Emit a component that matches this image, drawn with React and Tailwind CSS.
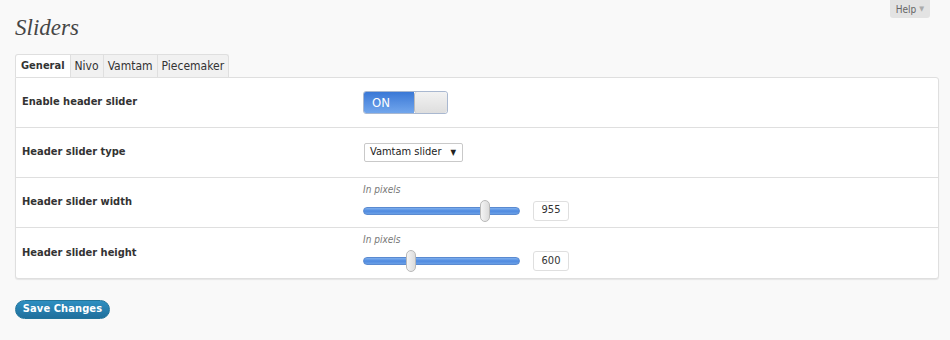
import React from "react";

function Slider({ pos, value }) {
  return (
    <div className="flex flex-col">
      <div className="text-[10px] italic text-[#777] leading-[12px] h-[12px]">In pixels</div>
      <div className="flex items-center mt-[4px]">
        <div className="relative w-[157px] h-[22px] flex items-center">
          <div className="w-full h-[8px] rounded-full bg-gradient-to-b from-[#7fb0ee] via-[#4f8ae0] to-[#6a9fe6] border border-[#5a8ad0]" />
          <div
            className="absolute top-0 w-[10px] h-[22px] rounded-full border border-[#b9b9b9] bg-gradient-to-r from-[#f4f4f4] to-[#dcdcdc]"
            style={{ left: pos }}
          />
        </div>
        <div className="ml-[13px] w-[36px] h-[20px] rounded-[3px] border border-[#dfdfdf] bg-white text-[11px] text-[#333] flex items-center justify-center">
          {value}
        </div>
      </div>
    </div>
  );
}

function Row({ label, children, last }) {
  return (
    <div className={"flex h-[50px] items-center " + (last ? "" : "border-b border-[#dfdfdf]")}>
      <div className="w-[347px] pl-[6px] text-[11px] font-bold text-[#333]">{label}</div>
      <div className="flex-1">{children}</div>
    </div>
  );
}

export default function App() {
  return (
    <div
      className="relative w-[950px] h-[340px] bg-[#f9f9f9] overflow-hidden"
      style={{ fontFamily: '"DejaVu Sans Condensed", "DejaVu Sans", Verdana, sans-serif' }}
    >
      <div className="absolute top-0 right-[20px] w-[40px] h-[18px] bg-[#e3e3e3] rounded-b-[3px] text-[10px] text-[#666] flex items-center justify-center gap-[3px]">
        <span>Help</span>
        <span className="text-[7px] text-[#aaa]">▼</span>
      </div>
      <div className="px-[15px]">
        <h2
          className="pt-[14px] h-[54px] text-[23px] italic text-[#464646] leading-[28px]"
          style={{ fontFamily: '"Liberation Serif", Georgia, serif' }}
        >
          Sliders
        </h2>
        <div className="flex h-[23px] items-stretch">
          <div className="px-[5px] flex items-center bg-white border border-b-0 border-[#dfdfdf] rounded-tl-[3px] text-[11px] font-bold text-[#333]">General</div>
          <div className="px-[4px] flex items-center bg-[#f1f1f1] border-t border-r border-[#dfdfdf] text-[12px] text-[#333]">Nivo</div>
          <div className="px-[4px] flex items-center bg-[#f1f1f1] border-t border-r border-[#dfdfdf] text-[12px] text-[#333]">Vamtam</div>
          <div className="px-[4px] flex items-center bg-[#f1f1f1] border-t border-r border-[#dfdfdf] rounded-tr-[3px] text-[12px] text-[#333]">Piecemaker</div>
        </div>
        <div className="w-[924px] bg-white border border-[#dfdfdf] rounded-b-[3px] rounded-tr-[3px] shadow-[0_1px_1px_rgba(0,0,0,0.08)]">
          <Row label="Enable header slider">
            <div className="flex w-[85px] h-[23px] rounded-[3px] border border-[#a9b8d0] overflow-hidden">
              <div className="w-[50px] bg-gradient-to-b from-[#3a78d6] to-[#72a6ec] text-white text-[13px] flex items-center pl-[8px]">ON</div>
              <div className="flex-1 bg-gradient-to-b from-[#f2f2f2] to-[#dedede] border-l border-[#bbb] rounded-[3px]" />
            </div>
          </Row>
          <Row label="Header slider type">
            <div className="w-[99px] h-[19px] ml-[1px] border border-[#c9c9c9] rounded-[2px] bg-white flex items-center justify-between pl-[5px] pr-[6px] text-[11px] text-[#222]">
              <span>Vamtam slider</span>
              <span className="text-[8px]">▼</span>
            </div>
          </Row>
          <Row label="Header slider width">
            <Slider pos={117} value="955" />
          </Row>
          <Row label="Header slider height" last>
            <Slider pos={43} value="600" />
          </Row>
        </div>
        <button className="mt-[21px] h-[19px] w-[95px] rounded-full bg-gradient-to-b from-[#2e8fc1] to-[#1f6f9c] border border-[#21759b] text-white text-[11px] font-bold tracking-[0.1px] flex items-center justify-center">
          Save Changes
        </button>
      </div>
    </div>
  );
}
